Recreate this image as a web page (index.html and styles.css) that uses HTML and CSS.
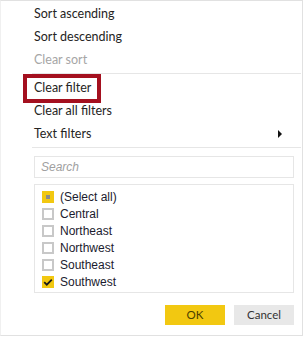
FILE: index.html
```html
<!DOCTYPE html>
<html lang="en">
<head>
  <meta charset="UTF-8">
  <title>Filter menu</title>
  <link rel="stylesheet" href="styles.css">
</head>
<body>
  <!-- Menu de filtro -->
  <div class="menu">
    <div class="item">Sort ascending</div>
    <div class="item">Sort descending</div>
    <div class="item disabled">Clear sort</div>
    <div class="sep"></div>
    <div class="item highlighted">Clear filter</div>
    <div class="item">Clear all filters</div>
    <div class="item submenu">Text filters <span class="arrow"></span></div>
    <div class="sep"></div>

    <div class="search">Search</div>

    <div class="list">
      <div class="row"><span class="box partial"></span>(Select all)</div>
      <div class="row"><span class="box"></span>Central</div>
      <div class="row"><span class="box"></span>Northeast</div>
      <div class="row"><span class="box"></span>Northwest</div>
      <div class="row"><span class="box"></span>Southeast</div>
      <div class="row">
        <span class="box checked">
          <svg width="12" height="12" viewBox="0 0 12 12"><path d="M2.2 6.2 L4.8 8.7 L9.8 3.6" fill="none" stroke="#1a1a1a" stroke-width="1.8"/></svg>
        </span>Southwest
      </div>
    </div>

    <div class="actions">
      <div class="btn ok">OK</div>
      <div class="btn cancel">Cancel</div>
    </div>
  </div>
</body>
</html>
```

FILE: styles.css
```css
*, *::before, *::after {
  margin: 0;
  padding: 0;
  box-sizing: border-box;
}

body {
  background: white;
  font-family: 'Lato', 'Open Sans', sans-serif;
  color: #252423;
}

.menu {
  width: 303px;
  height: 336px;
  border: 1px solid #e1e1e1;
  border-left-color: #f0f0f0;
  padding: 1px 8px 0 33px;
  display: flex;
  flex-direction: column;
}

.item {
  height: 23px;
  line-height: 23px;
  font-size: 12.5px;
  position: relative;
}

.item.disabled {
  color: #a6a6a6;
}

/* caixa vermelha de destaque */
.item.highlighted::after {
  content: '';
  position: absolute;
  left: -11px;
  top: -2px;
  width: 78px;
  height: 29px;
  border: 4px solid #a4101f;
}

.submenu {
  display: flex;
  justify-content: space-between;
  align-items: center;
}

.arrow {
  width: 0;
  height: 0;
  border-left: 4px solid #111;
  border-top: 4px solid transparent;
  border-bottom: 4px solid transparent;
  margin-right: 12px;
}

.sep {
  height: 1px;
  background: #e6e6e6;
  margin: 2px -7px 2px -2px;
}

.search {
  margin-top: 6px;
  height: 22px;
  border: 1px solid #e6e6e6;
  padding-left: 6px;
  line-height: 20px;
  font-family: 'Liberation Sans', Arial, sans-serif;
  font-style: italic;
  font-size: 12px;
  color: #a0a0a0;
}

.list {
  margin-top: 6px;
  height: 109px;
  border: 1px solid #e6e6e6;
  padding: 3px 7px;
  font-family: 'Liberation Sans', Arial, sans-serif;
  font-size: 12px;
  color: #1b1b2e;
}

.row {
  height: 17px;
  display: flex;
  align-items: center;
  gap: 6px;
}

.box {
  width: 12px;
  height: 12px;
  border: 2px solid #c8c8c8;
  display: flex;
  align-items: center;
  justify-content: center;
}

.box.partial,
.box.checked {
  border: none;
  background: #f2c811;
}

.box.partial::after {
  content: '';
  width: 4px;
  height: 4px;
  background: #8c8c8c;
}

.actions {
  margin-top: 12px;
  display: flex;
  justify-content: flex-end;
  gap: 9px;
}

.btn {
  width: 60px;
  height: 20px;
  line-height: 20px;
  text-align: center;
  font-size: 11.5px;
}

.ok {
  background: #f2c811;
  color: #4a4000;
}

.cancel {
  background: #e8e8e8;
  color: #333;
}
```
